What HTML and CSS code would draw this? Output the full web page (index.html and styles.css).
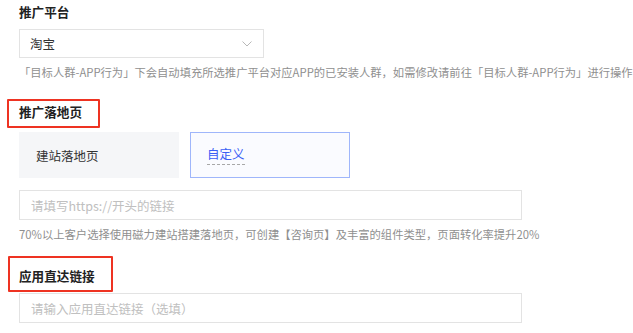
FILE: index.html
```html
<!DOCTYPE html>
<html lang="zh-CN">
<head>
  <meta charset="UTF-8">
  <title>推广设置</title>
  <link rel="stylesheet" href="styles.css">
</head>
<body>
  <div class="form">
    <div class="label">推广平台</div>
    <div class="select">
      <span>淘宝</span>
      <svg class="chevron" width="10" height="6" viewBox="0 0 10 6">
        <path d="M0.5 0.5 L5 5 L9.5 0.5" fill="none" stroke="#b8b8b8" stroke-width="1"/>
      </svg>
    </div>
    <div class="help">「目标人群-APP行为」下会自动填充所选推广平台对应APP的已安装人群，如需修改请前往「目标人群-APP行为」进行操作</div>

    <div class="label mark mark-first">推广落地页</div>
    <div class="tabs">
      <div class="tab">建站落地页</div>
      <div class="tab active"><span class="dashed">自定义</span></div>
    </div>
    <input class="input input-first" type="text" placeholder="请填写https://开头的链接">
    <div class="help">70%以上客户选择使用磁力建站搭建落地页，可创建【咨询页】及丰富的组件类型，页面转化率提升20%</div>

    <div class="label mark mark-second">应用直达链接</div>
    <input class="input input-second" type="text" placeholder="请输入应用直达链接（选填）">
  </div>
</body>
</html>
```

FILE: styles.css
```css
body {
  margin: 0;
  font-family: "Noto Sans CJK SC", "Noto Sans", sans-serif;
  background: #fff;
  color: #333;
  overflow: hidden;
}
.form {
  padding-left: 19px;
  display: flex;
  flex-direction: column;
  align-items: flex-start;
}
.label {
  font-size: 12.6px;
  font-weight: bold;
  color: #222;
  line-height: 24px;
}
.select {
  box-sizing: border-box;
  margin-top: 5px;
  width: 245px;
  height: 29px;
  border: 1px solid #e3e3e3;
  padding: 0 10px;
  display: flex;
  align-items: center;
  justify-content: space-between;
  font-size: 12.5px;
  color: #333;
}
.chevron {
  margin-right: 1px;
}
.help {
  margin-top: 6px;
  font-size: 11.3px;
  line-height: 16px;
  color: #8f8f8f;
  white-space: nowrap;
}
.mark {
  border: 2px solid #ee3322;
  border-radius: 1px;
  line-height: 20px;
}
.mark-first {
  margin-top: 19px;
  margin-left: -12px;
  padding: 1px 16px 4px 10px;
}
.mark-second {
  margin-top: 14px;
  margin-left: -11px;
  padding: 8px 16px 4px 9px;
}
.tabs {
  margin-top: 4px;
  display: flex;
  gap: 11px;
}
.tab {
  box-sizing: border-box;
  width: 160px;
  height: 46px;
  padding-left: 16px;
  display: flex;
  align-items: center;
  background: #f5f6f8;
  border: 1px solid #f5f6f8;
  font-size: 12.5px;
  color: #333;
}
.tab.active {
  background: #fafbff;
  border-color: #9fb6fb;
  color: #3b5ff5;
}
.dashed {
  padding-bottom: 2px;
  border-bottom: 1px dashed #a8a8a8;
  line-height: 16px;
}
.input {
  box-sizing: border-box;
  width: 503px;
  height: 30px;
  border: 1px solid #e3e3e3;
  padding: 0 11px;
  font-family: inherit;
  font-size: 12.5px;
  color: #333;
  outline: none;
  background: #fff;
}
.input::placeholder {
  color: #c0c0c0;
}
.input-first {
  margin-top: 12px;
}
.input-second {
  margin-top: 1px;
}
```
